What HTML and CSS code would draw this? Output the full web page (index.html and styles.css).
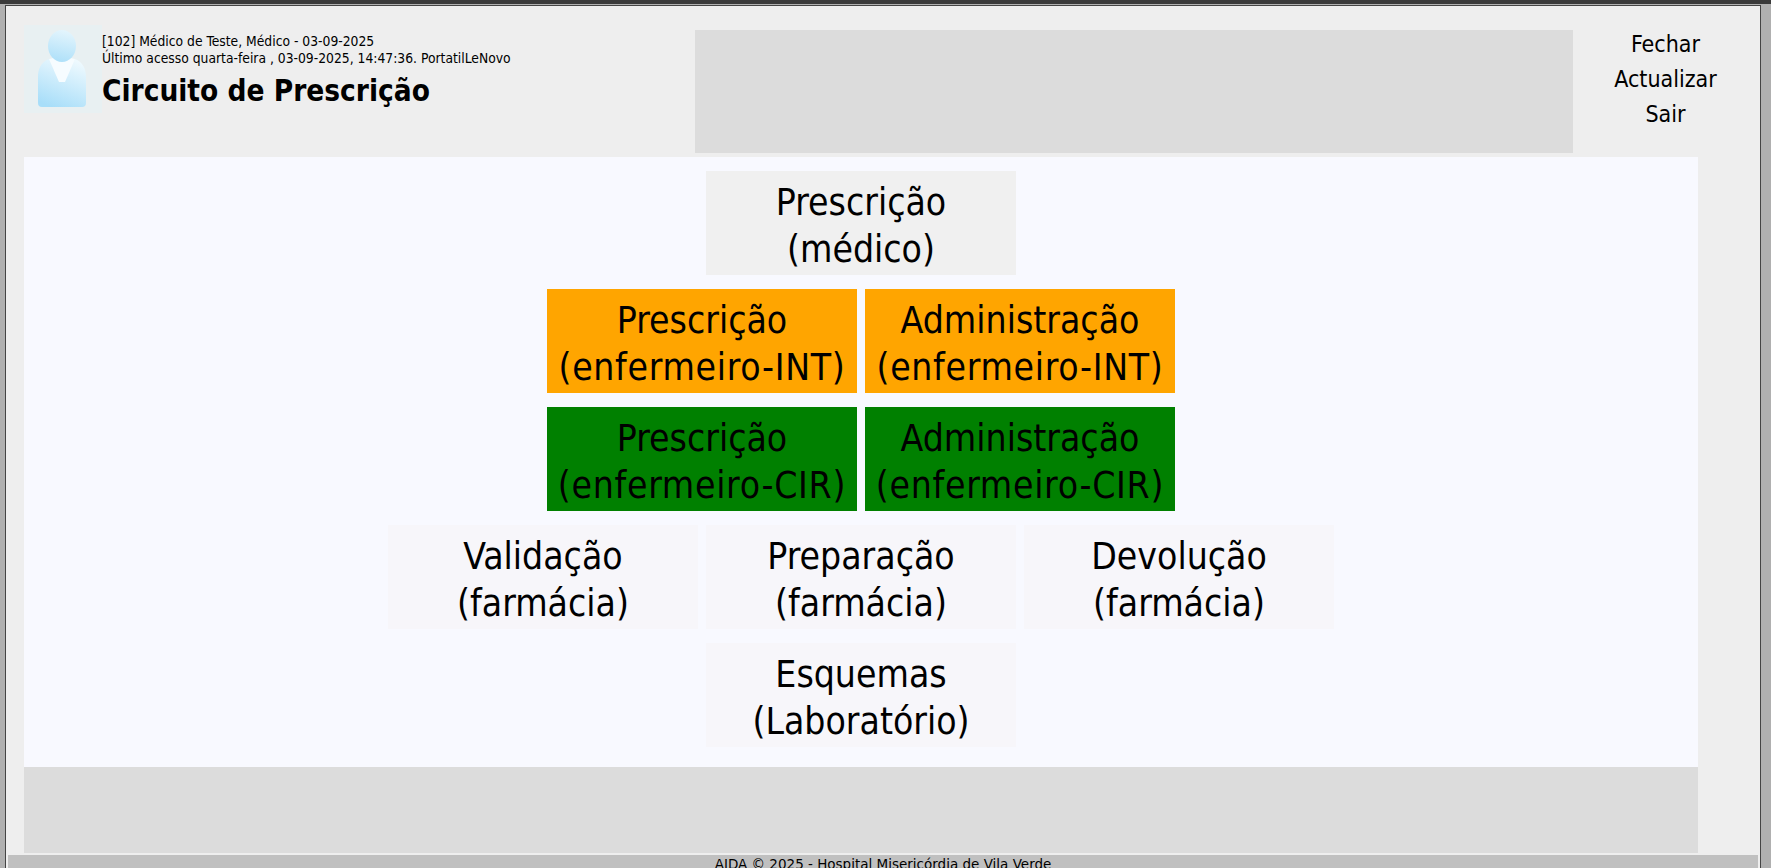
FILE: index.html
```html
<!DOCTYPE html>
<html>

<head>
    <meta charset="utf-8">
    <title>Circuito de Prescrição</title>
    <link rel="stylesheet" href="styles.css">
</head>

<body>
    <div class="topbar"></div>
    <div class="window">
        <div class="header">
            <div class="user">
                <svg class="avatar" viewBox="0 0 78 88">
                    <defs>
                        <linearGradient id="headFill" x1="0.6" y1="0" x2="0.4" y2="1">
                            <stop offset="0" stop-color="#e4f5fd" />
                            <stop offset="1" stop-color="#aee0f9" />
                        </linearGradient>
                        <linearGradient id="bodyFill" x1="0.7" y1="0" x2="0.3" y2="1">
                            <stop offset="0" stop-color="#eef9fe" />
                            <stop offset="1" stop-color="#a8def9" />
                        </linearGradient>
                    </defs>
                    <rect width="78" height="88" fill="#e8f0f2" />
                    <path d="M25 34 L38 57 L51 34 C59 37 62 44 62 52 L62 78 Q62 82 58 82 L18 82 Q14 82 14 78 L14 52 C14 44 17 37 25 34 Z" fill="url(#bodyFill)" />
                    <path d="M25 34 L34 32 L42 32 L51 34 L41 57 L35 57 Z" fill="#f6fcff" />
                    <ellipse cx="38" cy="21" rx="14" ry="16" fill="url(#headFill)" />
                </svg>
                <div class="userInfo">
                    <div class="userLine">[102] Médico de Teste, Médico - 03-09-2025</div>
                    <div class="userLine">Último acesso quarta-feira , 03-09-2025, 14:47:36. PortatilLeNovo</div>
                    <h1 class="pageTitle">Circuito de Prescrição</h1>
                </div>
            </div>
            <div class="headerPanel"></div>
            <div class="headerLinks">
                <a class="headerLink">Fechar</a>
                <a class="headerLink">Actualizar</a>
                <a class="headerLink">Sair</a>
            </div>
        </div>

        <div class="main">
            <div class="row">
                <div class="box boxLight">Prescrição<br>(médico)</div>
            </div>
            <div class="row">
                <div class="box boxOrange">Prescrição<br><span class="role">(enfermeiro-INT)</span></div>
                <div class="box boxOrange">Administração<br><span class="role">(enfermeiro-INT)</span></div>
            </div>
            <div class="row">
                <div class="box boxGreen">Prescrição<br><span class="role">(enfermeiro-CIR)</span></div>
                <div class="box boxGreen">Administração<br><span class="role">(enfermeiro-CIR)</span></div>
            </div>
            <div class="row">
                <div class="box boxPale">Validação<br>(farmácia)</div>
                <div class="box boxPale">Preparação<br>(farmácia)</div>
                <div class="box boxPale">Devolução<br>(farmácia)</div>
            </div>
            <div class="row">
                <div class="box boxPale">Esquemas<br>(Laboratório)</div>
            </div>
        </div>

        <div class="footerPanel"></div>
        <div class="statusBar">AIDA © 2025 - Hospital Misericórdia de Vila Verde</div>
    </div>
</body>

</html>
```

FILE: styles.css
```css
html,
body {
    height: 100%;
}

body {
    margin: 0;
    overflow: hidden;
    background: #b0b0b0;
    font-family: "DejaVu Sans", "Liberation Sans", sans-serif;
    font-stretch: condensed;
    color: #000;
    display: flex;
    flex-direction: column;
}

.topbar {
    height: 4px;
    margin-bottom: 1px;
    background: #3a3a3a;
}

.window {
    flex: 1;
    min-height: 0;
    margin: 0 10px 0 5px;
    border: 1px solid #444;
    border-bottom: 0;
    background: #eee;
    display: flex;
    flex-direction: column;
}

.header {
    display: flex;
    height: 151px;
    padding-top: 19px;
    padding-left: 18px;
    box-sizing: border-box;
    flex-shrink: 0;
}

.user {
    width: 671px;
    display: flex;
}

.avatar {
    width: 78px;
    height: 88px;
}

.userInfo {
    padding-top: 8px;
}

.userLine {
    font-size: 13.75px;
    line-height: 17px;
}

.pageTitle {
    margin: 6px 0 0;
    font-size: 29.5px;
    line-height: 36px;
    font-weight: bold;
}

.headerPanel {
    width: 878px;
    height: 123px;
    margin-top: 5px;
    background: #dcdcdc;
}

.headerLinks {
    width: 185px;
    padding-top: 2px;
    display: flex;
    flex-direction: column;
    align-items: center;
}

.headerLink {
    font-size: 23px;
    line-height: 35px;
}

.main {
    width: 1674px;
    height: 610px;
    margin-left: 18px;
    padding-top: 14px;
    box-sizing: border-box;
    background: #f8f9ff;
    flex-shrink: 0;
}

.row {
    display: flex;
    justify-content: center;
    gap: 8px;
    margin-bottom: 14px;
}

.box {
    width: 310px;
    height: 104px;
    padding-top: 8px;
    box-sizing: border-box;
    font-size: 37px;
    line-height: 47px;
    text-align: center;
}

.role {
    letter-spacing: 0.7px;
}

.boxLight {
    background: #f0f0f0;
}

.boxOrange {
    background: #ffa500;
}

.boxGreen {
    background: #008000;
}

.boxPale {
    background: #f7f6fa;
}

.footerPanel {
    width: 1674px;
    height: 86px;
    margin-left: 18px;
    background: #dcdcdc;
    flex-shrink: 0;
}

.statusBar {
    height: 13px;
    margin: 2px 2px 0;
    overflow: hidden;
    background: #c0c0c0;
    font-family: "DejaVu Sans", sans-serif;
    font-stretch: normal;
    font-size: 13.5px;
    line-height: 18px;
    text-align: center;
}
```
